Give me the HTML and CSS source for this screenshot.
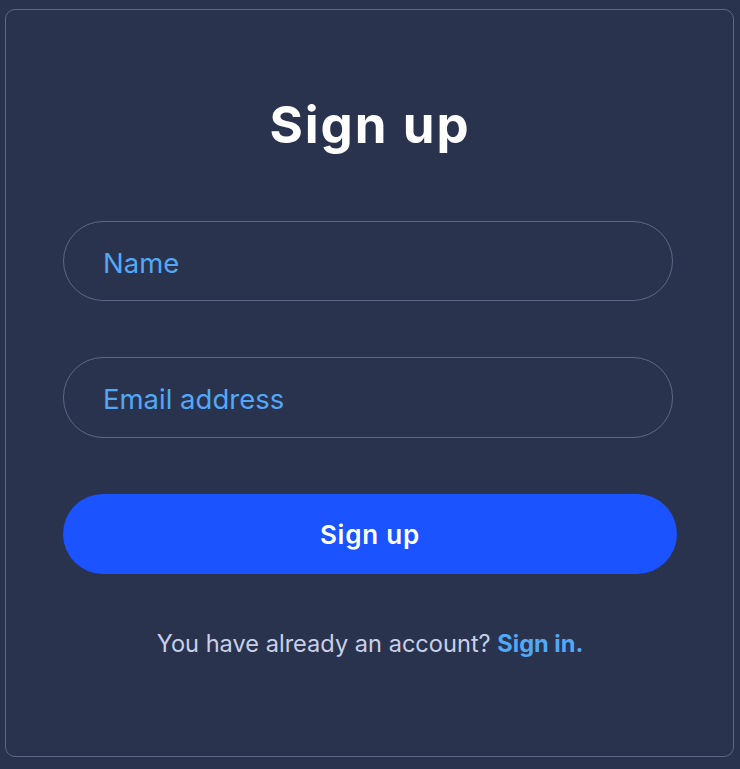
FILE: index.html
```html
<!DOCTYPE html>
<html lang="en">
<head>
<meta charset="utf-8">
<title>Sign up</title>
<link rel="stylesheet" href="styles.css">
</head>
<body>
<main class="card">
  <h1 class="title">Sign up</h1>
  <form class="form">
    <input class="field" type="text" placeholder="Name">
    <input class="field" type="email" placeholder="Email address">
    <button class="submit" type="button">Sign up</button>
  </form>
  <p class="footer">You have already an account? <a class="link" href="#">Sign in.</a></p>
</main>
</body>
</html>
```

FILE: styles.css
```css
html, body {
  margin: 0;
  background: #2a334d;
}
body {
  padding: 9px 6px 12px 5px;
  font-family: "Inter", "Liberation Sans", sans-serif;
}
.card {
  box-sizing: border-box;
  height: 748px;
  border: 1px solid #5d6887;
  border-radius: 10px;
  background: #2a334d;
  padding: 0 56px 0 57px;
  display: flex;
  flex-direction: column;
  align-items: stretch;
}
.title {
  margin: 83px 0 0;
  text-align: center;
  color: #ffffff;
  font-family: "Inter", sans-serif;
  font-weight: 700;
  font-size: 51px;
  line-height: 64px;
  letter-spacing: 2px;
}
.form {
  margin-top: 64px;
  display: flex;
  flex-direction: column;
}
.field {
  box-sizing: border-box;
  width: 610px;
  height: 80px;
  border: 1px solid #5d6887;
  border-radius: 40px;
  background: transparent;
  padding: 3px 39px 0;
  font-family: "Inter", sans-serif;
  font-size: 27.5px;
  color: #52a8f7;
  outline: none;
  margin-bottom: 56px;
}
.field + .field {
  height: 81px;
}
.field::placeholder {
  color: #52a8f7;
  opacity: 1;
}
.submit {
  box-sizing: border-box;
  width: 614px;
  height: 80px;
  border: 0;
  border-radius: 40px;
  background: #1a53ff;
  color: #ffffff;
  font-family: "Inter", sans-serif;
  font-weight: 600;
  font-size: 26px;
  letter-spacing: 0.8px;
  cursor: pointer;
}
.footer {
  margin: 54px 0 0;
  text-align: center;
  color: #c7d0e8;
  font-size: 23.6px;
  line-height: 32px;
}
.link {
  color: #52a8f7;
  font-weight: 700;
  text-decoration: none;
}
```
